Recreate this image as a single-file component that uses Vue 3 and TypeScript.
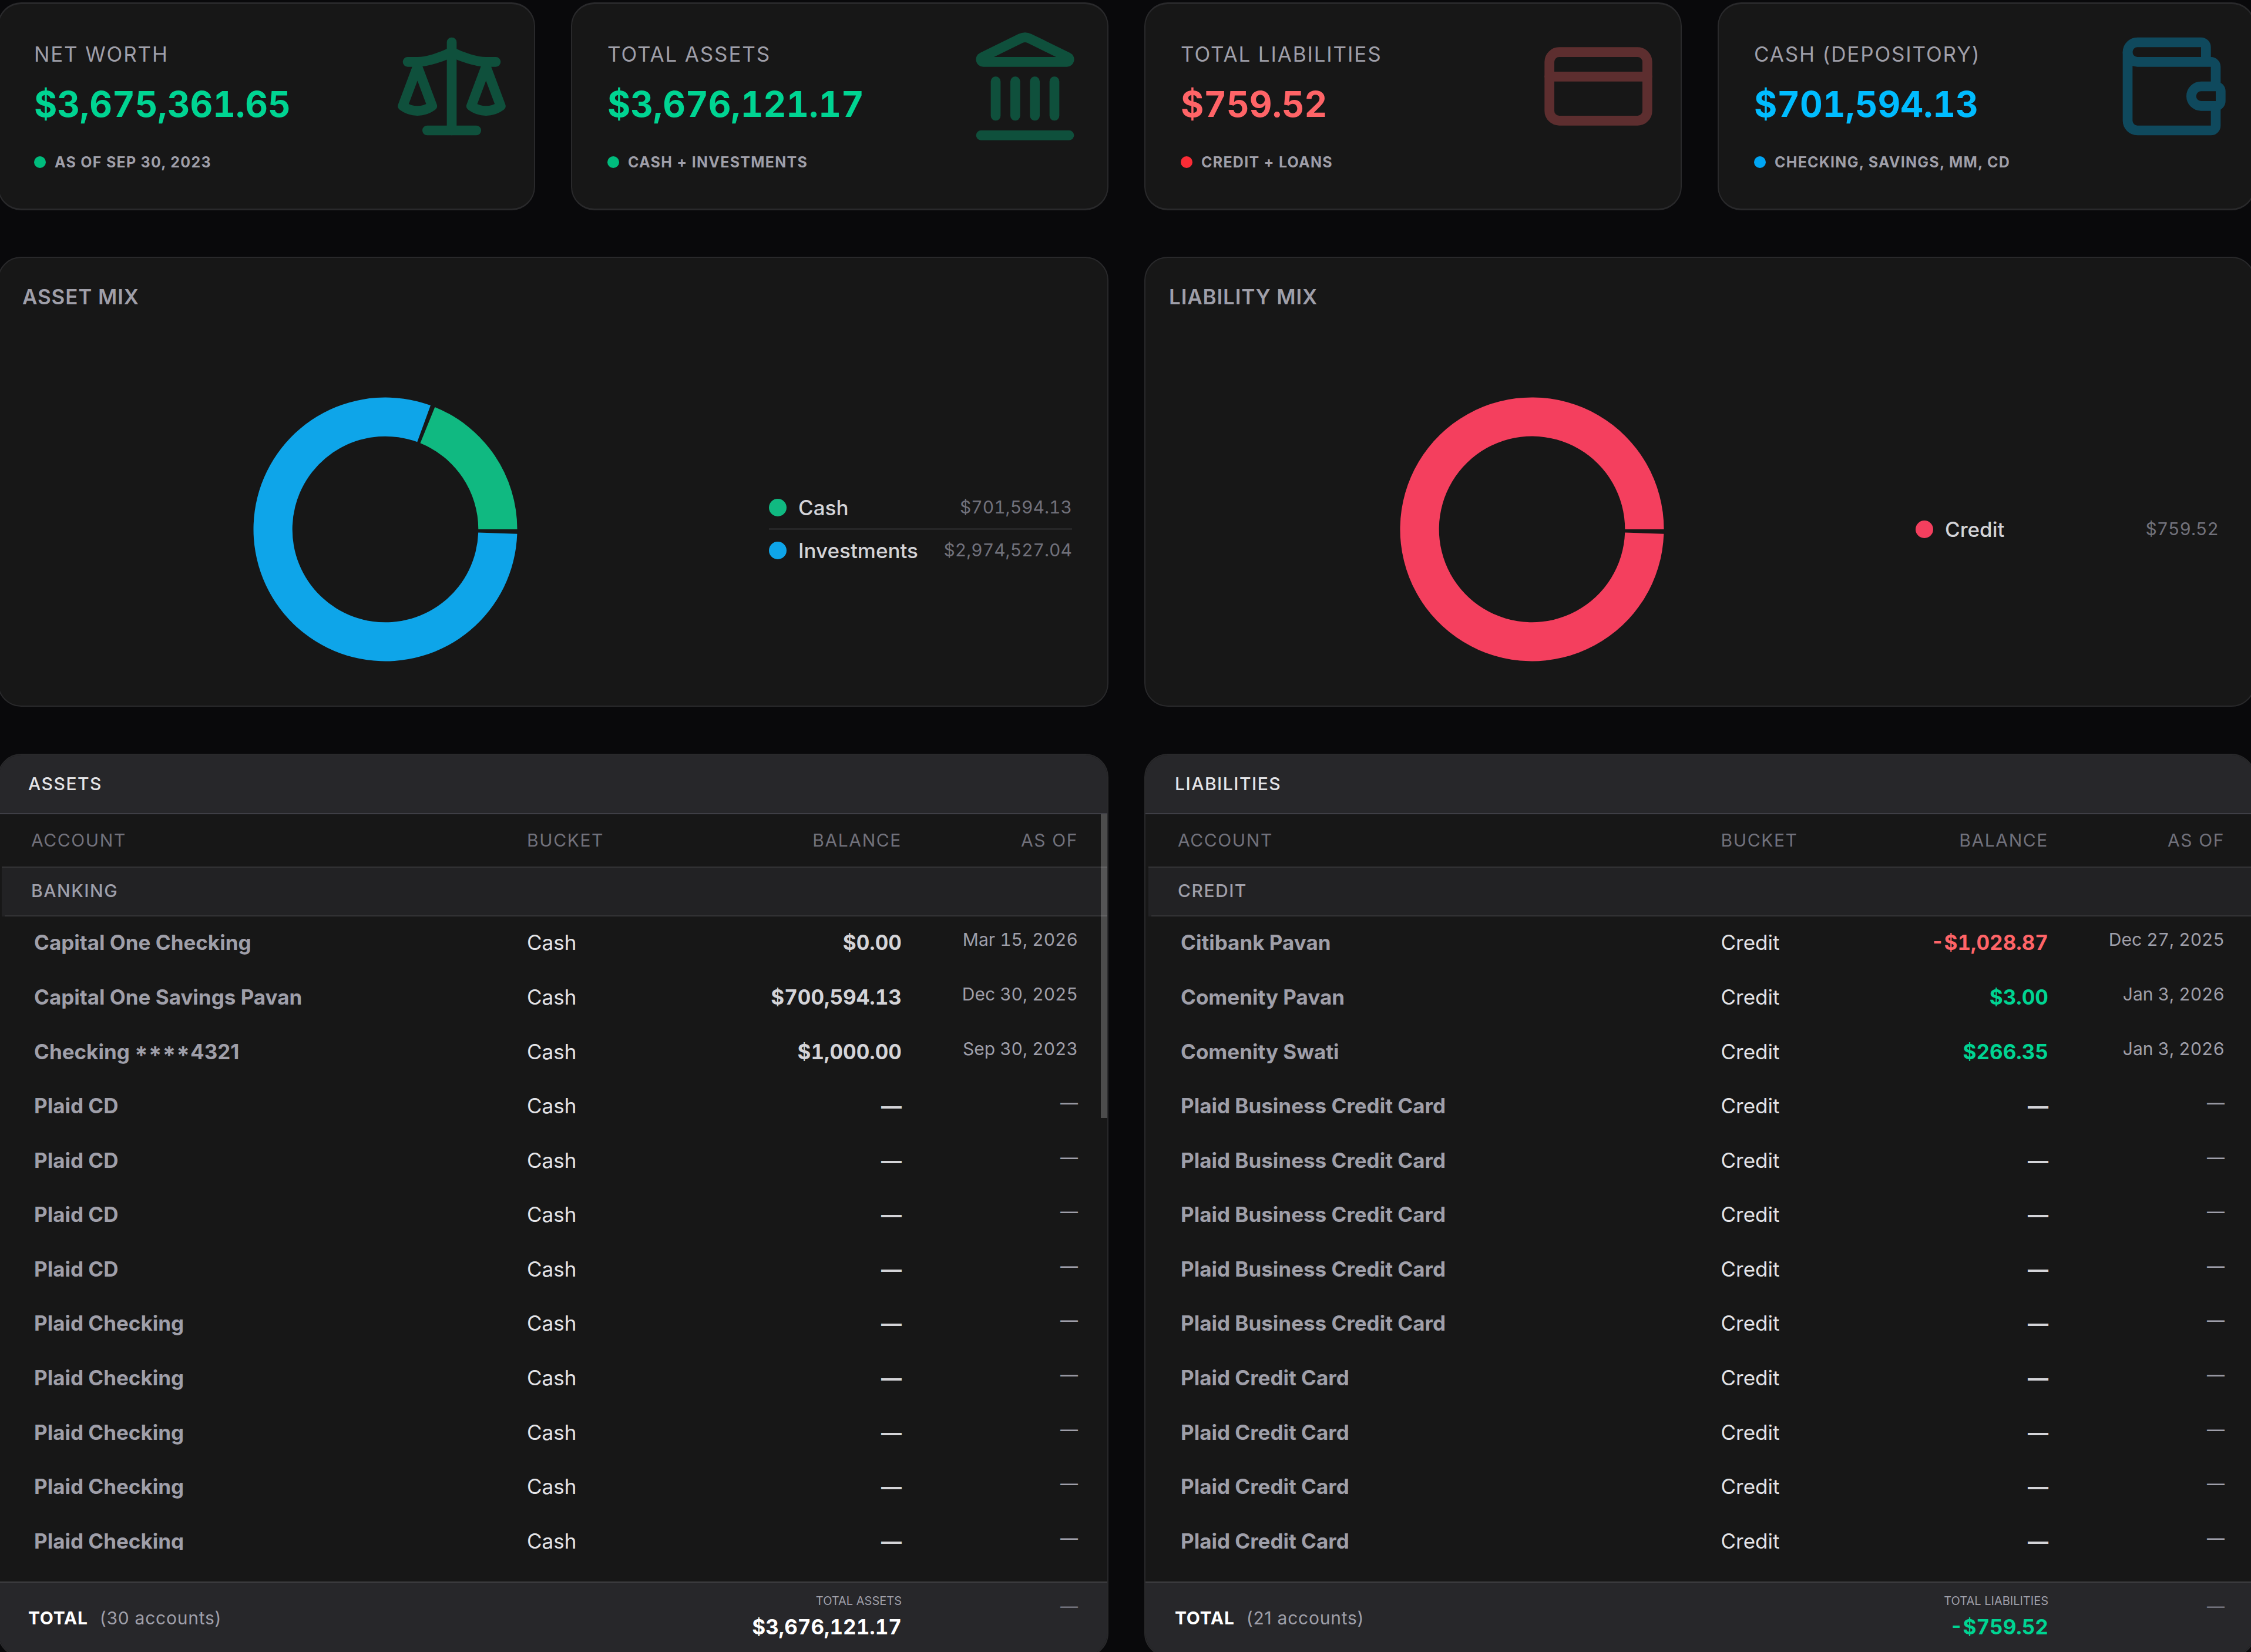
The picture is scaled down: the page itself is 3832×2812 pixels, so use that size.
<script setup lang="ts">
interface Stat {
  label: string
  value: string
  note: string
  tone: 'green' | 'red' | 'sky'
  icon: string[]
}
interface Slice {
  name: string
  amount: number
  display: string
  color: string
}
interface Row {
  name: string
  mask?: string
  last4?: string
  bucket: string
  balance: string
  asOf: string
  tone?: 'pos' | 'neg'
}
interface Ledger {
  title: string
  side: 'assets' | 'liabilities'
  group: string
  rows: Row[]
  count: number
  totalLabel: string
  total: string
  scrollable: boolean
}

const stats: Stat[] = [
  {
    label: 'NET WORTH',
    value: '$3,675,361.65',
    note: 'AS OF SEP 30, 2023',
    tone: 'green',
    icon: [
      'm16 16 3-8 3 8c-.87.65-1.92 1-3 1s-2.13-.35-3-1Z',
      'm2 16 3-8 3 8c-.87.65-1.92 1-3 1s-2.13-.35-3-1Z',
      'M7 21h10',
      'M12 3v18',
      'M3 7h2c2 0 5-1 7-2 2 1 5 2 7 2h2',
    ],
  },
  {
    label: 'TOTAL ASSETS',
    value: '$3,676,121.17',
    note: 'CASH + INVESTMENTS',
    tone: 'green',
    icon: [
      'M10 18v-7',
      'M11.12 2.198a2 2 0 0 1 1.76.006l7.866 3.847c.476.233.31.949-.22.949H3.474c-.53 0-.695-.716-.22-.949z',
      'M14 18v-7',
      'M18 18v-7',
      'M3 22h18',
      'M6 18v-7',
    ],
  },
  {
    label: 'TOTAL LIABILITIES',
    value: '$759.52',
    note: 'CREDIT + LOANS',
    tone: 'red',
    icon: ['M4 5h16a2 2 0 0 1 2 2v10a2 2 0 0 1-2 2H4a2 2 0 0 1-2-2V7a2 2 0 0 1 2-2z', 'M2 10h20'],
  },
  {
    label: 'CASH (DEPOSITORY)',
    value: '$701,594.13',
    note: 'CHECKING, SAVINGS, MM, CD',
    tone: 'sky',
    icon: [
      'M19 7V4a1 1 0 0 0-1-1H5a2 2 0 0 0 0 4h15a1 1 0 0 1 1 1v4h-3a2 2 0 0 0 0 4h3a1 1 0 0 0 1-1v-2a1 1 0 0 0-1-1',
      'M3 5v14a2 2 0 0 0 2 2h15a1 1 0 0 0 1-1v-4',
    ],
  },
]

const mixes: { title: string; slices: Slice[] }[] = [
  {
    title: 'ASSET MIX',
    slices: [
      { name: 'Cash', amount: 701594.13, display: '$701,594.13', color: '#10b981' },
      { name: 'Investments', amount: 2974527.04, display: '$2,974,527.04', color: '#0ea5e9' },
    ],
  },
  {
    title: 'LIABILITY MIX',
    slices: [{ name: 'Credit', amount: 759.52, display: '$759.52', color: '#f43f5e' }],
  },
]

const OUTER = 224.5
const INNER = 158.3
const PAD = 2

/** Ring segments, counter-clockwise from three o'clock, separated by PAD degrees. */
function arcs(slices: Slice[]): { d: string; color: string }[] {
  const sum = slices.reduce((s, x) => s + x.amount, 0)
  const span = 360 - PAD * slices.length
  const at = (r: number, deg: number) => {
    const a = (deg * Math.PI) / 180
    return `${(r * Math.cos(a)).toFixed(2)} ${(-r * Math.sin(a)).toFixed(2)}`
  }
  let start = 0
  return slices.map((s) => {
    const sweep = (s.amount / sum) * span
    const end = start + sweep
    const large = sweep > 180 ? 1 : 0
    const d = `M${at(OUTER, start)}A${OUTER} ${OUTER} 0 ${large} 0 ${at(OUTER, end)}L${at(INNER, end)}A${INNER} ${INNER} 0 ${large} 1 ${at(INNER, start)}Z`
    start = end + PAD
    return { d, color: s.color }
  })
}

const blank = (name: string, bucket: string, n: number): Row[] =>
  Array.from({ length: n }, () => ({ name, bucket, balance: '—', asOf: '—' }))

const ledgers: Ledger[] = [
  {
    title: 'ASSETS',
    side: 'assets',
    group: 'BANKING',
    rows: [
      { name: 'Capital One Checking', bucket: 'Cash', balance: '$0.00', asOf: 'Mar 15, 2026' },
      { name: 'Capital One Savings Pavan', bucket: 'Cash', balance: '$700,594.13', asOf: 'Dec 30, 2025' },
      { name: 'Checking ', mask: '****', last4: '4321', bucket: 'Cash', balance: '$1,000.00', asOf: 'Sep 30, 2023' },
      ...blank('Plaid CD', 'Cash', 4),
      ...blank('Plaid Checking', 'Cash', 5),
    ],
    count: 30,
    totalLabel: 'TOTAL ASSETS',
    total: '$3,676,121.17',
    scrollable: true,
  },
  {
    title: 'LIABILITIES',
    side: 'liabilities',
    group: 'CREDIT',
    rows: [
      { name: 'Citibank Pavan', bucket: 'Credit', balance: '-$1,028.87', asOf: 'Dec 27, 2025', tone: 'neg' },
      { name: 'Comenity Pavan', bucket: 'Credit', balance: '$3.00', asOf: 'Jan 3, 2026', tone: 'pos' },
      { name: 'Comenity Swati', bucket: 'Credit', balance: '$266.35', asOf: 'Jan 3, 2026', tone: 'pos' },
      ...blank('Plaid Business Credit Card', 'Credit', 5),
      ...blank('Plaid Credit Card', 'Credit', 4),
    ],
    count: 21,
    totalLabel: 'TOTAL LIABILITIES',
    total: '-$759.52',
    scrollable: false,
  },
]
</script>

<template>
  <main class="page">
    <section class="stats">
      <article v-for="s in stats" :key="s.label" class="box stat" :class="s.tone">
        <div class="stat-label">{{ s.label }}</div>
        <div class="stat-value">{{ s.value }}</div>
        <div class="stat-note"><i class="stat-dot"></i><span>{{ s.note }}</span></div>
        <svg class="stat-icon" viewBox="0 0 24 24" aria-hidden="true">
          <path v-for="d in s.icon" :key="d" :d="d" />
        </svg>
      </article>
    </section>

    <section class="pair mixes">
      <article v-for="m in mixes" :key="m.title" class="box mix">
        <h2 class="mix-title">{{ m.title }}</h2>
        <div class="mix-body">
          <div class="chart">
            <svg class="donut" viewBox="-230 -230 460 460">
              <path v-for="a in arcs(m.slices)" :key="a.color" :d="a.d" :fill="a.color" />
            </svg>
          </div>
          <ul class="legend">
            <li v-for="s in m.slices" :key="s.name">
              <i class="legend-dot" :style="{ background: s.color }"></i>
              <span class="legend-name">{{ s.name }}</span>
              <span class="legend-amount">{{ s.display }}</span>
            </li>
          </ul>
        </div>
      </article>
    </section>

    <section class="pair ledgers">
      <article v-for="l in ledgers" :key="l.side" class="box ledger" :class="l.side">
        <header class="ledger-title">{{ l.title }}</header>
        <div class="scroll">
          <div class="grid head">
            <span>ACCOUNT</span><span>BUCKET</span><span class="num">BALANCE</span><span class="num">AS OF</span>
          </div>
          <div class="group">{{ l.group }}</div>
          <div class="rows">
            <div v-for="(r, i) in l.rows" :key="i" class="grid row">
              <span class="name">{{ r.name }}<span v-if="r.mask" class="mask">{{ r.mask }}</span>{{ r.last4 }}</span>
              <span class="bucket">{{ r.bucket }}</span>
              <span class="num balance" :class="r.tone">{{ r.balance }}</span>
              <span class="num date">{{ r.asOf }}</span>
            </div>
          </div>
          <div v-if="l.scrollable" class="thumb"></div>
        </div>
        <footer class="grid foot">
          <div class="foot-total">
            <b>TOTAL</b><span>({{ l.count }} accounts)</span>
          </div>
          <span></span>
          <div class="num foot-sum">
            <small>{{ l.totalLabel }}</small>
            <strong>{{ l.total }}</strong>
          </div>
          <span class="num foot-date">—</span>
        </footer>
      </article>
    </section>
  </main>
</template>

<style>
body {
  background: #09090b;
}
</style>

<style scoped>
.page {
  box-sizing: border-box;
  width: 3832px;
  height: 2812px;
  padding-top: 4px;
  overflow: hidden;
  background: #09090b;
  font-family: Inter, 'Noto Sans', sans-serif;
  color: #e4e4e7;
}
.stats,
.pair {
  display: grid;
  width: 3843px;
  margin-left: -4px;
  column-gap: 61px;
}
.stats {
  grid-template-columns: repeat(4, 915px);
}
.pair {
  grid-template-columns: repeat(2, 1891px);
}
.mixes {
  margin-top: 79px;
}
.ledgers {
  margin-top: 80px;
}
.box {
  box-sizing: border-box;
  position: relative;
  border: 2px solid #29292b;
  border-radius: 40px;
  background: #171717;
}

.stat {
  height: 354px;
  padding: 60px 60px 0;
  border-top-width: 3px;
  border-bottom-width: 3px;
}
.stat-label {
  font-size: 35px;
  line-height: 50px;
  letter-spacing: 1.85px;
  color: #9f9fa9;
}
.stat-value {
  margin-top: 20px;
  font-size: 60px;
  line-height: 80px;
  font-weight: 700;
  font-variant-numeric: tabular-nums;
}
.stat-note {
  display: flex;
  align-items: center;
  gap: 15px;
  margin-top: 40px;
  font-size: 25px;
  line-height: 38px;
  font-weight: 700;
  letter-spacing: 1.25px;
  color: #9f9fa9;
}
.stat-dot {
  width: 20px;
  height: 20px;
  border-radius: 50%;
}
.stat-icon {
  position: absolute;
  top: 40px;
  right: 40px;
  width: 200px;
  height: 200px;
  fill: none;
  stroke-width: 2;
  stroke-linecap: round;
  stroke-linejoin: round;
  opacity: 0.3;
}
.green .stat-value { color: #00d492; }
.green .stat-icon { stroke: #00d492; }
.green .stat-dot { background: #00bc7d; }
.red .stat-value { color: #ff6467; }
.red .stat-icon { stroke: #ff6467; }
.red .stat-dot { background: #fb2c36; }
.sky .stat-value { color: #00bcff; }
.sky .stat-icon { stroke: #00bcff; }
.sky .stat-dot { background: #00a6f4; }

.mix {
  height: 766px;
  padding: 41px 40px 40px;
}
.mix-title {
  margin: 0;
  font-size: 35px;
  line-height: 50px;
  font-weight: 600;
  letter-spacing: 0.875px;
  color: #9f9fa9;
}
.mix-body {
  display: flex;
  align-items: center;
  height: 521px;
  margin-top: 110px;
}
.chart {
  display: flex;
  justify-content: center;
  width: 1236px;
}
.donut {
  display: block;
  width: 460px;
  height: 460px;
}
.legend {
  width: 516px;
  margin: 0 0 0 35px;
  padding: 0;
  list-style: none;
}
.legend li {
  display: flex;
  align-items: center;
  padding: 10px 0;
  line-height: 50px;
}
.legend li + li {
  border-top: 3px solid #262627;
}
.legend-dot {
  width: 30px;
  height: 30px;
  margin-right: 20px;
  border-radius: 50%;
}
.legend-name {
  font-size: 35px;
  font-weight: 500;
  color: #d4d4d8;
}
.legend-amount {
  margin: -2px 0 0 auto;
  font-size: 30px;
  font-variant-numeric: tabular-nums;
  color: #71717b;
}

.ledger {
  display: flex;
  flex-direction: column;
  height: 1537px;
  overflow: hidden;
}
.assets {
  --name: 899px;
}
.liabilities {
  --name: 979.5px;
}
.ledger-title {
  box-sizing: border-box;
  height: 101px;
  padding-left: 50px;
  border-bottom: 2px solid #3f3f46;
  background: #27272a;
  font-size: 30px;
  line-height: 99px;
  font-weight: 500;
  letter-spacing: 1.5px;
  color: #e4e4e7;
}
.scroll {
  position: relative;
  height: 1252px;
  overflow: hidden;
}
.grid {
  display: grid;
  grid-template-columns: var(--name) 300px 1fr 300px;
  padding-right: 50px;
}
.num {
  text-align: right;
}
.head {
  height: 89px;
  font-size: 30px;
  line-height: 89px;
  letter-spacing: 1.6px;
  color: #71717b;
}
.head > :first-child {
  padding-left: 55px;
}
.group {
  box-sizing: border-box;
  position: relative;
  height: 85px;
  margin-left: 5px;
  padding-left: 50px;
  border-top: 2px solid #343436;
  background: #222224;
  font-size: 30px;
  line-height: 79px;
  font-weight: 500;
  letter-spacing: 1.5px;
  color: #9f9fa9;
}
.group::after {
  content: '';
  position: absolute;
  left: 5px;
  right: 0;
  bottom: 0;
  height: 2px;
  background: #343436;
}
.rows {
  margin-top: -1.7px;
}
.row {
  height: 92.6px;
  line-height: 92.6px;
  font-size: 35px;
}
.name {
  padding-left: 60px;
  font-weight: 700;
  color: #9f9fa9;
}
.mask {
  position: relative;
  top: 8px;
  font-size: 41px;
  line-height: 0;
  letter-spacing: 0.8px;
}
.bucket {
  color: #e4e4e7;
}
.balance {
  font-weight: 700;
  font-variant-numeric: tabular-nums;
  color: #d4d4d8;
}
.balance.pos {
  color: #00d492;
}
.balance.neg {
  color: #ff6467;
}
.date {
  font-size: 30px;
  line-height: 82.6px;
  font-variant-numeric: tabular-nums;
  color: #9f9fa9;
}
.thumb {
  position: absolute;
  top: 0;
  right: 0;
  width: 11px;
  height: 517px;
  background: rgba(255, 255, 255, 0.23);
}
.foot {
  flex: 1;
  margin-top: 54px;
  border-top: 2px solid #3f3f42;
  background: #27272a;
  font-size: 30px;
}
.foot-total {
  display: flex;
  gap: 20px;
  padding: 41px 0 0 50px;
  line-height: 38px;
  letter-spacing: 0.75px;
}
.foot-total b {
  font-weight: 700;
  color: #fff;
}
.foot-total span {
  color: #9f9fa9;
}
.foot-sum {
  padding-top: 19px;
}
.foot-sum small {
  display: block;
  font-size: 20px;
  line-height: 25px;
  color: #9f9fa9;
}
.foot-sum strong {
  display: block;
  margin-top: 6px;
  font-size: 35px;
  line-height: 50px;
  font-weight: 700;
  font-variant-numeric: tabular-nums;
  color: #fff;
}
.liabilities .foot-sum strong {
  color: #00d492;
}
.foot-date {
  padding-top: 21px;
  line-height: 38px;
  color: #71717b;
}
</style>
